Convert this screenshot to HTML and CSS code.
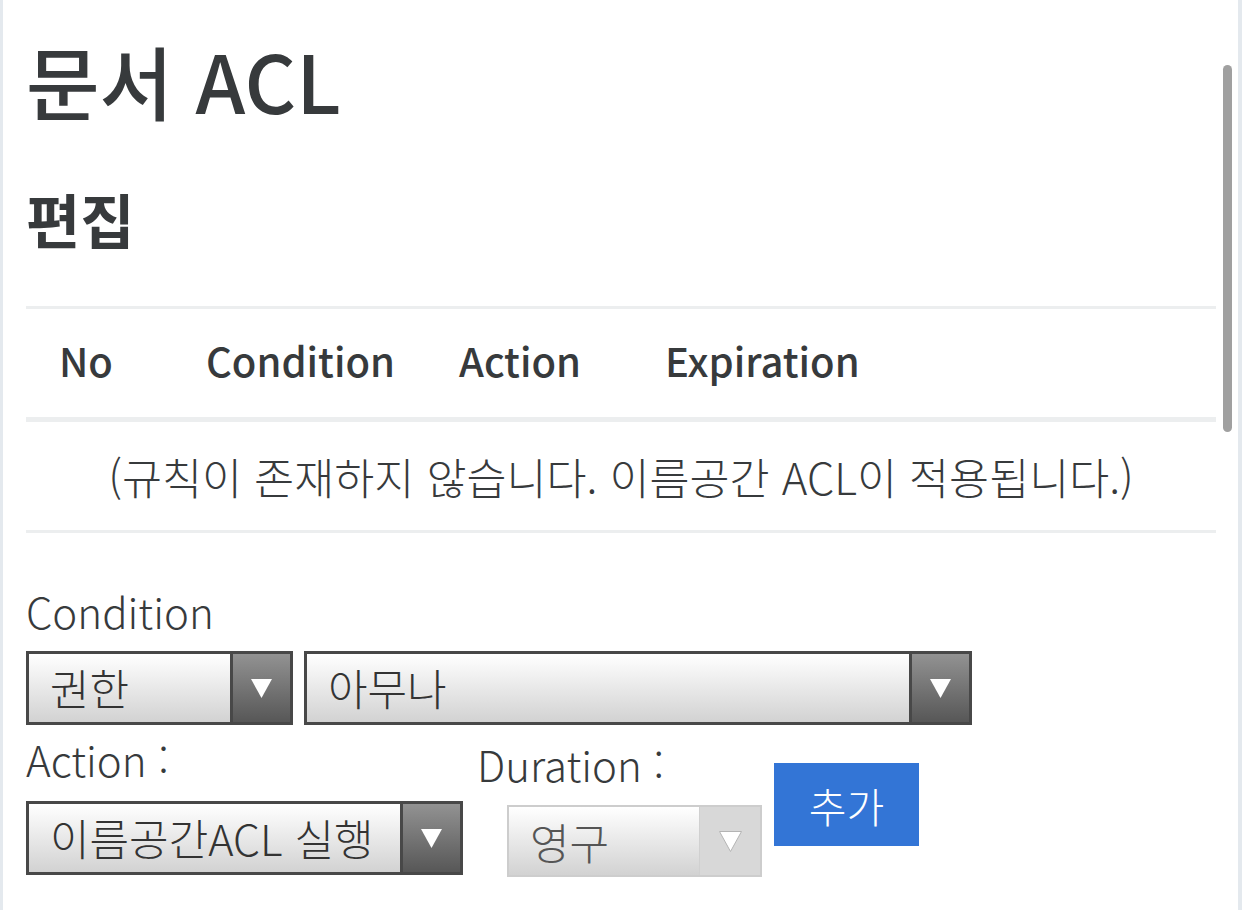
FILE: index.html
```html
<!DOCTYPE html>
<html lang="ko">
<head>
    <meta charset="UTF-8">
    <meta name="viewport" content="width=device-width, initial-scale=1.0">
    <title>문서 ACL</title>
    <link rel="stylesheet" href="styles.css">
</head>
<body>
    <div class="page">
        <h1>문서 ACL</h1>
        <h2>편집</h2>

        <table class="acl-table">
            <thead>
                <tr>
                    <th class="col-no">No</th>
                    <th class="col-cond">Condition</th>
                    <th class="col-action">Action</th>
                    <th>Expiration</th>
                </tr>
            </thead>
            <tbody>
                <tr>
                    <td colspan="4" class="empty">(규칙이 존재하지 않습니다. 이름공간 ACL이 적용됩니다.)</td>
                </tr>
            </tbody>
        </table>

        <div class="acl-form">
            <div class="label">Condition</div>
            <div class="cond-row">
                <div class="select sel-type">
                    <span class="value">권한</span>
                    <span class="arrow"><svg width="21" height="19" viewBox="0 0 21 19"><path d="M0 0H21L10.5 19Z" fill="#fff"/></svg></span>
                </div>
                <div class="select sel-target">
                    <span class="value">아무나</span>
                    <span class="arrow"><svg width="21" height="19" viewBox="0 0 21 19"><path d="M0 0H21L10.5 19Z" fill="#fff"/></svg></span>
                </div>
            </div>

            <div class="bottom-row">
                <div class="field">
                    <div class="label">Action :</div>
                    <div class="select sel-action">
                        <span class="value">이름공간ACL 실행</span>
                        <span class="arrow"><svg width="21" height="19" viewBox="0 0 21 19"><path d="M0 0H21L10.5 19Z" fill="#fff"/></svg></span>
                    </div>
                </div>
                <div class="field field-duration">
                    <div class="label">Duration :</div>
                    <div class="select sel-duration disabled">
                        <span class="value">영구</span>
                        <span class="arrow"><svg width="23" height="21" viewBox="0 0 23 21"><path d="M0.5 0.5H22.5L11.5 20.5Z" fill="#fff" stroke="#b4b4b4" stroke-width="1"/></svg></span>
                    </div>
                </div>
                <button class="add-btn">추가</button>
            </div>
        </div>

        <div class="scrollbar"></div>
    </div>
</body>
</html>
```

FILE: styles.css
```css
body {
    margin: 0;
    background-color: #e4e9ee;
    font-family: "Noto Sans CJK KR", "Noto Sans", sans-serif;
    color: #373a3c;
}
.page {
    position: relative;
    margin: 0 4px 0 3px;
    min-height: 910px;
    background-color: #fff;
    padding: 0 22px 0 23px;
    box-sizing: border-box;
    overflow: hidden;
}
h1 {
    margin: 0;
    padding-top: 27px;
    font-size: 80px;
    font-weight: 500;
    line-height: 104px;
}
h2 {
    margin: 54px 0 0;
    font-size: 59px;
    font-weight: 700;
    line-height: 68px;
}
.acl-table {
    width: 100%;
    margin-top: 53px;
    border-collapse: collapse;
}
.acl-table th {
    text-align: left;
    font-size: 40px;
    font-weight: 500;
    height: 102px;
    padding: 0 0 6px 33px;
    border-top: 3px solid #eceeef;
    border-bottom: 5px solid #eceeef;
}
.acl-table th.col-no { width: 114px; }
.acl-table th.col-cond { width: 220px; }
.acl-table th.col-action { width: 173px; }
.acl-table td.empty {
    text-align: center;
    font-size: 43.5px;
    font-weight: 300;
    height: 108px;
    padding: 0;
    border-bottom: 3px solid #eceeef;
}
.acl-form {
    margin-top: 49px;
}
.label {
    font-size: 42px;
    font-weight: 300;
    line-height: 58px;
}
.cond-row {
    display: flex;
    gap: 11px;
    margin-top: 11px;
}
.select {
    display: flex;
    height: 74px;
    box-sizing: border-box;
    border: 3px solid #484848;
    background: linear-gradient(#ffffff, #d2d2d2);
    font-size: 43px;
    font-weight: 300;
    color: #333;
}
.select .value {
    flex: 1;
    padding-left: 21px;
    line-height: 66px;
}
.select .arrow {
    width: 57px;
    display: flex;
    align-items: center;
    justify-content: center;
    border-left: 3px solid #484848;
    background: linear-gradient(#929292, #575757);
}
.sel-type { width: 267px; }
.sel-target { width: 668px; }
.sel-action { width: 437px; margin-top: 13px; }
.bottom-row {
    display: flex;
    align-items: flex-start;
    margin-top: 5px;
}
.field-duration {
    margin-left: 14px;
    padding-top: 5px;
}
.field-duration .select {
    margin-left: 30px;
    margin-top: 12px;
}
.sel-duration {
    width: 255px;
    height: 72px;
    border: 2px solid #cdcdcd;
    color: #555;
}
.sel-duration .value { line-height: 68px; }
.sel-duration .arrow {
    width: 60px;
    border-left: 1px solid #d0d0d0;
    background: #d8d8d8;
}
.add-btn {
    margin: 33px 0 0 12px;
    width: 145px;
    height: 83px;
    background-color: #3375d6;
    color: #fff;
    border: none;
    font-family: inherit;
    font-size: 41px;
    font-weight: 300;
    padding: 0;
}
.scrollbar {
    position: absolute;
    top: 65px;
    right: 6px;
    width: 9px;
    height: 367px;
    border-radius: 5px;
    background-color: #a0a0a0;
}
```
